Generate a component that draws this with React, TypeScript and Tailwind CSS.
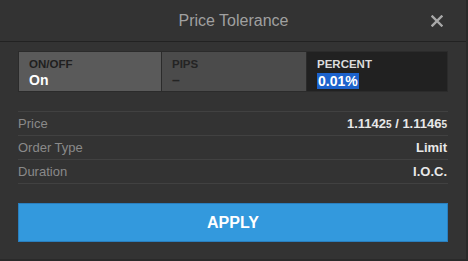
import { useState } from "react";

type Mode = "onoff" | "pips" | "percent";

function CloseIcon() {
  return (
    <svg width="12" height="12" viewBox="0 0 12 12" className="text-[#a9a9a9]">
      <path d="M1.5 1.5 L10.5 10.5 M10.5 1.5 L1.5 10.5" stroke="currentColor" strokeWidth="2.4" strokeLinecap="square" />
    </svg>
  );
}

function Price({ big, pip }: { big: string; pip: string }) {
  return (
    <span>
      {big}
      <span className="text-[10px]">{pip}</span>
    </span>
  );
}

export default function App() {
  const [mode] = useState<Mode>("percent");

  const rows = [
    { label: "Price", value: (
      <span>
        <Price big="1.1142" pip="5" /> / <Price big="1.1146" pip="5" />
      </span>
    ) },
    { label: "Order Type", value: "Limit" },
    { label: "Duration", value: "I.O.C." },
  ];

  return (
    <div className="w-[468px] h-[261px] bg-[#2a2a2a] font-['Liberation_Sans',Arial,sans-serif]">
      <div className="w-[466px] h-[259px] bg-[#333333] flex flex-col">
        {/* header */}
        <div className="h-[42px] border-b border-[#222222] flex items-center relative">
          <div className="flex-1 text-center text-[16px] text-[#a0a0a0] pl-[1px]">Price Tolerance</div>
          <button className="absolute right-[23px] top-[15px]">
            <CloseIcon />
          </button>
        </div>

        <div className="px-[18px] pt-[9px] flex flex-col">
          {/* toggle group */}
          <div className="h-[41px] grid grid-cols-[142px_144px_1fr] gap-[1px] bg-[#2b2b2b] border border-[#2b2b2b] w-[430px]">
            <div className="bg-[#5a5a5a] pl-[10px] pt-[5px] flex flex-col">
              <span className="text-[11.5px] font-bold text-[#1f1f1f] leading-[14px]">ON/OFF</span>
              <span className="text-[14px] font-bold text-white leading-[17px] mt-[1px]">On</span>
            </div>
            <div className="bg-[#4b4b4b] pl-[10px] pt-[5px] flex flex-col">
              <span className="text-[11.5px] font-bold text-[#242424] leading-[14px]">PIPS</span>
              <span className="text-[14px] font-bold text-[#242424] leading-[17px] mt-[1px]">–</span>
            </div>
            <div className={`${mode === "percent" ? "bg-[#212121]" : "bg-[#4b4b4b]"} pl-[10px] pt-[5px] flex flex-col`}>
              <span className="text-[11.5px] font-bold text-[#dcdcdc] leading-[14px]">PERCENT</span>
              <span className="mt-[1px] leading-[17px]">
                <span className="text-[14px] font-bold text-white bg-[#1c62cc] px-[1px]">0.01%</span>
              </span>
            </div>
          </div>

          {/* details */}
          <div className="mt-[19px] border-b border-[#414141] w-[430px]">
            {rows.map((r) => (
              <div key={r.label} className="h-[24px] border-t border-[#414141] flex items-center justify-between">
                <span className="text-[13px] text-[#8a8a8a]">{r.label}</span>
                <span className="text-[13px] font-bold text-[#e8e8e8] pr-[1px]">{r.value}</span>
              </div>
            ))}
          </div>

          <button className="mt-[19px] h-[39px] w-[430px] bg-[#3399dd] border border-[#2a7fbf] text-white font-bold text-[16px]">
            APPLY
          </button>
        </div>
      </div>
    </div>
  );
}
